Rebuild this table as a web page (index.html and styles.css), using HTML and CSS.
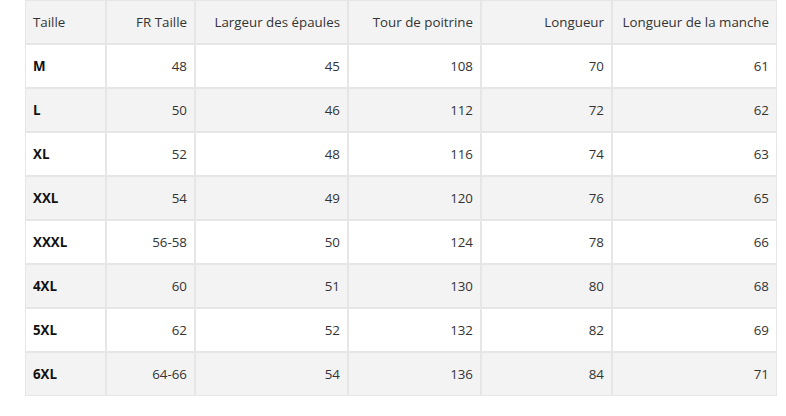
FILE: index.html
```html
<!DOCTYPE html>
<html lang="fr">
<head>
<meta charset="utf-8">
<title>Guide des tailles</title>
<link rel="stylesheet" href="styles.css">
</head>
<body>
<div class="wrap">
<table class="size-table">
  <colgroup>
    <col class="c1"><col class="c2"><col class="c3"><col class="c4"><col class="c5"><col class="c6">
  </colgroup>
  <thead>
    <tr><th class="left">Taille</th><th>FR Taille</th><th>Largeur des épaules</th><th>Tour de poitrine</th><th>Longueur</th><th>Longueur de la manche</th></tr>
  </thead>
  <tbody>
    <tr><td class="size">M</td><td>48</td><td>45</td><td>108</td><td>70</td><td>61</td></tr>
    <tr><td class="size">L</td><td>50</td><td>46</td><td>112</td><td>72</td><td>62</td></tr>
    <tr><td class="size">XL</td><td>52</td><td>48</td><td>116</td><td>74</td><td>63</td></tr>
    <tr><td class="size">XXL</td><td>54</td><td>49</td><td>120</td><td>76</td><td>65</td></tr>
    <tr><td class="size">XXXL</td><td>56-58</td><td>50</td><td>124</td><td>78</td><td>66</td></tr>
    <tr><td class="size">4XL</td><td>60</td><td>51</td><td>130</td><td>80</td><td>68</td></tr>
    <tr><td class="size">5XL</td><td>62</td><td>52</td><td>132</td><td>82</td><td>69</td></tr>
    <tr><td class="size">6XL</td><td>64-66</td><td>54</td><td>136</td><td>84</td><td>71</td></tr>
  </tbody>
</table>
</div>
</body>
</html>
```
FILE: styles.css
```css
html, body {
  margin: 0;
  padding: 0;
  background: #ffffff;
}
.wrap {
  padding: 0 0 0 25px;
}
.size-table {
  border-collapse: separate;
  border-spacing: 0;
  table-layout: fixed;
  width: 752px;
  font-family: "Open Sans", "Liberation Sans", sans-serif;
  font-size: 13.33px;
  color: #333333;
}
.c1 { width: 81px; }
.c2 { width: 89px; }
.c3 { width: 153px; }
.c4 { width: 133px; }
.c5 { width: 131px; }
.c6 { width: 165px; }
.size-table th,
.size-table td {
  border: 1px solid #e6e6e6;
  box-sizing: border-box;
  height: 44px;
  padding: 0 7px 0 7px;
  text-align: right;
  vertical-align: middle;
  font-weight: normal;
  white-space: nowrap;
  line-height: 18px;
}
.size-table thead tr,
.size-table tbody tr:nth-child(even) {
  background: #f3f3f3;
}
.size-table th.left,
.size-table td.size {
  text-align: left;
}
.size-table td.size {
  font-weight: bold;
  color: #111111;
}
```
